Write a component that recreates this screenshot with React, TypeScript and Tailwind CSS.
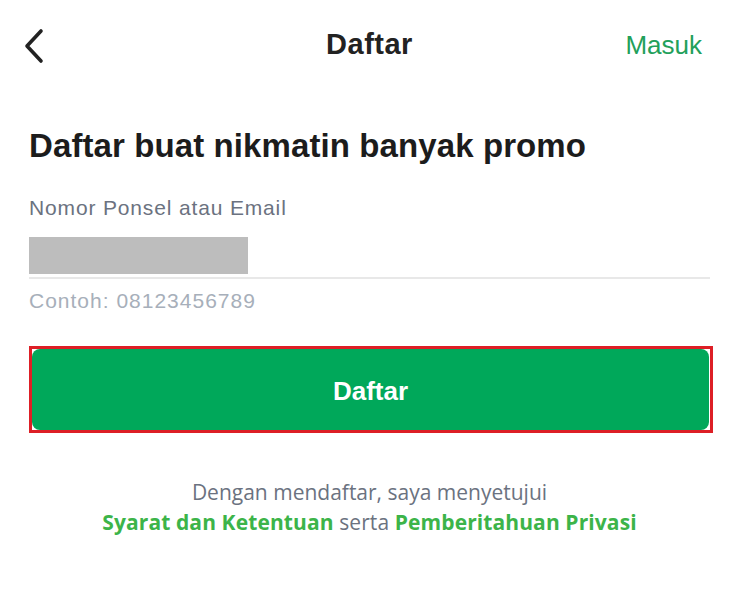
import React from "react";

export default function App() {
  return (
    <div className="w-[739px] h-[590px] bg-white overflow-hidden" style={{ fontFamily: '"Liberation Sans", Arial, sans-serif' }}>
      {/* Header */}
      <div className="relative flex items-center justify-between h-[90px] pl-[20px] pr-[37px]">
        <svg width="28" height="36" viewBox="0 0 28 36" className="mt-[1px]">
          <path d="M21 3 L7 18 L21 33" fill="none" stroke="#222" strokeWidth="3.6" strokeLinecap="round" strokeLinejoin="round" />
        </svg>
        <div className="absolute left-0 right-0 text-center text-[29px] font-bold text-[#222] pointer-events-none tracking-[0.5px]">Daftar</div>
        <div className="text-[26px] text-[#22a05a]">Masuk</div>
      </div>

      <div className="px-[29px]">
        <h1 className="mt-[35px] text-[33px] font-bold text-[#1c1c1c] leading-[42px] tracking-[0.1px]">Daftar buat nikmatin banyak promo</h1>
        <div className="mt-[28px] text-[21px] text-[#6b7280] leading-[26px] tracking-[0.85px]">Nomor Ponsel atau Email</div>
        <div className="mt-[16px]">
          <div className="w-[219px] h-[37px] bg-[#bdbdbd]" />
          <div className="mt-[3px] h-[2px] w-[681px] bg-[#e8e8e8]" />
        </div>
        <div className="mt-[9px] text-[21px] text-[#a7afba] leading-[26px] tracking-[1px]">Contoh: 08123456789</div>

        <div className="mt-[32px] w-[684px] h-[87px] border-[3px] border-[#dd1f26] pr-[1px]">
          <button className="w-full h-full rounded-[8px] bg-[#00a85a] text-white text-[26px] font-bold flex items-center justify-center pt-[4px]">Daftar</button>
        </div>
      </div>

      <div className="mt-[44px] text-center text-[21px] leading-[30px] text-[#6b7280]" style={{ fontFamily: '"Open Sans", "Noto Sans", sans-serif' }}>
        <div>Dengan mendaftar, saya menyetujui</div>
        <div className="tracking-[0.1px]">
          <span className="font-bold text-[#3cb449]">Syarat dan Ketentuan</span> serta <span className="font-bold text-[#3cb449]">Pemberitahuan Privasi</span>
        </div>
      </div>
    </div>
  );
}
